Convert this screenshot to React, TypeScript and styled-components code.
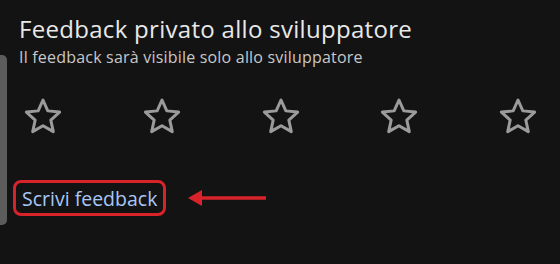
import React from "react";
import styled, { createGlobalStyle } from "styled-components";

const Global = createGlobalStyle`
  html, body { margin: 0; padding: 0; background: #131313; }
  body { width: 560px; height: 264px; overflow: hidden; font-family: "Open Sans", sans-serif; }
`;

const Page = styled.div`
  display: flex;
  width: 560px;
  height: 264px;
  background: #131313;
`;

const SideHandle = styled.div`
  flex: 0 0 7px;
  margin-top: 55px;
  height: 170px;
  background: #5c5c5c;
  border-radius: 0 5px 5px 0;
`;

const Content = styled.div`
  flex: 1;
  display: flex;
  flex-direction: column;
  padding: 14px 0 0 12px;
`;

const Title = styled.h1`
  margin: 0;
  font-family: "Open Sans", sans-serif;
  font-weight: 400;
  font-size: 24px;
  letter-spacing: 0.3px;
  line-height: 30px;
  color: #e8e8e8;
`;

const Subtitle = styled.p`
  margin: 3px 0 0;
  font-family: "Open Sans", sans-serif;
  font-size: 16px;
  letter-spacing: 0.2px;
  line-height: 21px;
  color: #c8c8c8;
`;

const Stars = styled.div`
  display: flex;
  justify-content: space-between;
  margin: 30px 23px 0 5px;
`;

const StarSvg = styled.svg`
  width: 38px;
  height: 38px;
  display: block;
`;

const ActionRow = styled.div`
  display: flex;
  align-items: center;
  gap: 22px;
  margin: 44px 0 0 -6px;
`;

const FeedbackButton = styled.button`
  display: flex;
  align-items: center;
  height: 36px;
  padding: 0 6px;
  background: transparent;
  border: 3px solid #d8232a;
  border-radius: 8px;
  font-family: "Open Sans", sans-serif;
  font-size: 19.5px;
  color: #a9c7f5;
  cursor: pointer;
`;

function starPoints(cx: number, cy: number, R: number, r: number) {
  const pts: string[] = [];
  for (let i = 0; i < 10; i++) {
    const rad = i % 2 === 0 ? R : r;
    const a = (-90 + i * 36) * (Math.PI / 180);
    pts.push(`${(cx + rad * Math.cos(a)).toFixed(2)},${(cy + rad * Math.sin(a)).toFixed(2)}`);
  }
  return pts.join(" ");
}

const Star = () => (
  <StarSvg viewBox="0 0 38 38">
    <polygon
      points={starPoints(19, 19.5, 17.5, 8.2)}
      fill="none"
      stroke="#9b9b9b"
      strokeWidth={3}
      strokeLinejoin="round"
    />
  </StarSvg>
);

const Arrow = () => (
  <svg width="80" height="18" viewBox="0 0 80 18">
    <line x1="10" y1="9" x2="78" y2="9" stroke="#d8232a" strokeWidth="3.5" />
    <polygon points="0,9 14,1 14,17" fill="#d8232a" />
  </svg>
);

export default function App() {
  return (
    <>
      <Global />
      <Page>
        <SideHandle />
        <Content>
          <Title>Feedback privato allo sviluppatore</Title>
          <Subtitle>Il feedback sarà visibile solo allo sviluppatore</Subtitle>
          <Stars>
            {[0, 1, 2, 3, 4].map((i) => (
              <Star key={i} />
            ))}
          </Stars>
          <ActionRow>
            <FeedbackButton>Scrivi feedback</FeedbackButton>
            <Arrow />
          </ActionRow>
        </Content>
      </Page>
    </>
  );
}
